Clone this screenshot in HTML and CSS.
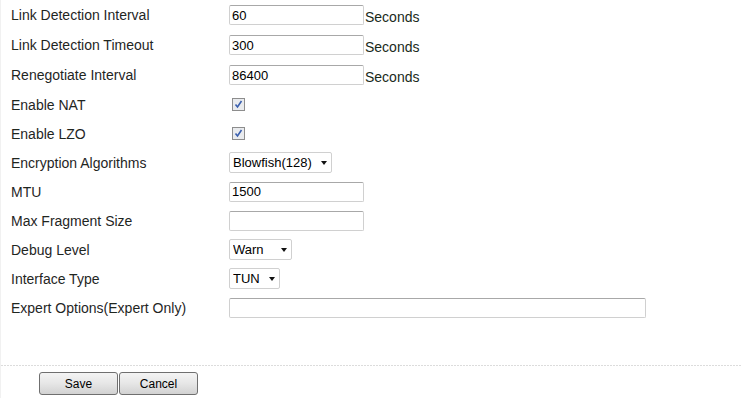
FILE: index.html
```html
<!DOCTYPE html>
<html lang="en">
<head>
    <meta charset="UTF-8">
    <title>OpenVPN Advanced Settings</title>
    <link rel="stylesheet" href="styles.css">
</head>
<body>
    <div class="page">
        <form class="settings">
            <div class="row tall">
                <label class="label">Link Detection Interval</label>
                <div class="field"><input type="text" class="text" value="60"><span class="unit">Seconds</span></div>
            </div>
            <div class="row tall">
                <label class="label">Link Detection Timeout</label>
                <div class="field"><input type="text" class="text" value="300"><span class="unit">Seconds</span></div>
            </div>
            <div class="row tall">
                <label class="label">Renegotiate Interval</label>
                <div class="field"><input type="text" class="text" value="86400"><span class="unit">Seconds</span></div>
            </div>
            <div class="row">
                <label class="label">Enable NAT</label>
                <div class="field"><input type="checkbox" class="check" checked></div>
            </div>
            <div class="row">
                <label class="label">Enable LZO</label>
                <div class="field"><input type="checkbox" class="check" checked></div>
            </div>
            <div class="row">
                <label class="label">Encryption Algorithms</label>
                <div class="field">
                    <span class="select-wrap">
                        <select class="select algo">
                            <option>Blowfish(128)</option>
                            <option>AES(128)</option>
                            <option>AES(256)</option>
                        </select>
                    </span>
                </div>
            </div>
            <div class="row">
                <label class="label">MTU</label>
                <div class="field"><input type="text" class="text" value="1500"></div>
            </div>
            <div class="row">
                <label class="label">Max Fragment Size</label>
                <div class="field"><input type="text" class="text" value=""></div>
            </div>
            <div class="row">
                <label class="label">Debug Level</label>
                <div class="field">
                    <span class="select-wrap">
                        <select class="select level">
                            <option>Warn</option>
                            <option>Info</option>
                            <option>Debug</option>
                        </select>
                    </span>
                </div>
            </div>
            <div class="row">
                <label class="label">Interface Type</label>
                <div class="field">
                    <span class="select-wrap">
                        <select class="select iface">
                            <option>TUN</option>
                            <option>TAP</option>
                        </select>
                    </span>
                </div>
            </div>
            <div class="row">
                <label class="label">Expert Options(Expert Only)</label>
                <div class="field"><input type="text" class="text wide" value=""></div>
            </div>
        </form>

        <div class="actions">
            <button type="button" class="btn">Save</button>
            <button type="button" class="btn">Cancel</button>
        </div>
    </div>
</body>
</html>
```

FILE: styles.css
```css
* {
    margin: 0;
    padding: 0;
    box-sizing: border-box;
}

body {
    font-family: "Liberation Sans", Arial, sans-serif;
    font-size: 14px;
    color: #222;
    background: #fff;
}

.page {
    width: 742px;
    height: 398px;
    border-left: 1px solid #f1f1f1;
}

.settings {
    padding-bottom: 43px;
}

.row {
    display: flex;
    align-items: center;
    height: 29px;
}

.row.tall {
    height: 30px;
}

.label {
    width: 228px;
    padding-left: 10px;
    color: #1f261f;
}

.field {
    display: flex;
    align-items: center;
}

.text {
    width: 135px;
    height: 20px;
    padding: 0 2px;
    border: 1px solid #d0d0d0;
    border-top-color: #a8a8a8;
    border-radius: 2px;
    font-family: inherit;
    font-size: 13px;
    color: #000;
    outline: none;
}

.text.wide {
    width: 417px;
}

.unit {
    margin-left: 1px;
    padding-top: 3px;
    color: #1a2a1a;
}

.check {
    appearance: none;
    width: 13px;
    height: 13px;
    margin-left: 3px;
    border: 1px solid #8d8d8d;
    background: #e9ebee url("data:image/svg+xml;utf8,<svg xmlns='http://www.w3.org/2000/svg' width='11' height='11'><path d='M2.5 5.5 L4.5 8 L8.5 2' fill='none' stroke='%233a5fae' stroke-width='1.6'/></svg>") no-repeat center;
}

.select-wrap {
    position: relative;
    display: inline-block;
}

.select-wrap::after {
    content: "";
    position: absolute;
    right: 5px;
    top: 9px;
    border-left: 3.5px solid transparent;
    border-right: 3.5px solid transparent;
    border-top: 4px solid #111;
    pointer-events: none;
}

.select {
    appearance: none;
    height: 21px;
    padding: 0 0 0 3px;
    border: 1px solid #d0d0d0;
    border-radius: 2px;
    background: #fff;
    font-family: inherit;
    font-size: 13px;
    color: #000;
    outline: none;
}

.select.algo {
    width: 103px;
}

.select.level {
    width: 63px;
}

.select.iface {
    width: 51px;
}

.actions {
    display: flex;
    gap: 1px;
    padding: 7px 0 0 38px;
    background: repeating-linear-gradient(90deg, #dcdcdc 0 2px, transparent 2px 3px) top left / 100% 1px no-repeat;
}

.btn {
    width: 79px;
    height: 23px;
    border: 1px solid #6f6f6f;
    border-radius: 3px;
    background: linear-gradient(#f4f4f4, #e6e6e6 50%, #d2d2d2);
    font-family: inherit;
    font-size: 12px;
    color: #000;
    cursor: pointer;
}
```
